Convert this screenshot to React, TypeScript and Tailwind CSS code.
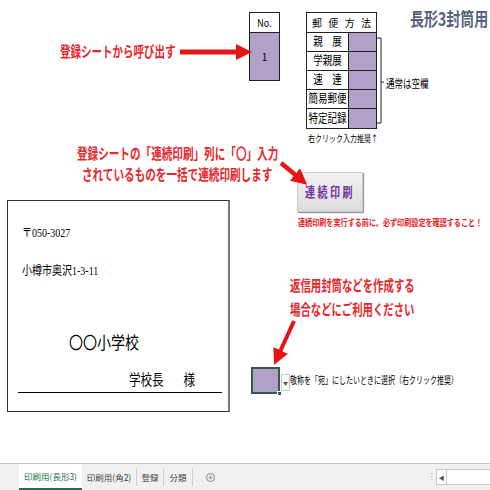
import React from 'react';

const jp = "font-['Noto_Sans_CJK_JP',sans-serif]";
const mincho = "font-['Liberation_Serif','Noto_Sans_CJK_JP',serif]";
const redText = `${jp} absolute whitespace-nowrap leading-none font-bold text-[#e8262b] origin-top scale-y-[1.4]`;

const postalRows = ['親　展', '学親展', '速　達', '簡易郵便', '特定記録'];

const Arrows: React.FC = () => (
  <svg className="absolute inset-0 pointer-events-none" width={490} height={463}>
    <defs>
      <marker id="head" markerUnits="userSpaceOnUse" markerWidth={16} markerHeight={16} refX={4} refY={8} orient="auto">
        <path d="M0,0 L16,8 L0,16 z" fill="#e81414" />
      </marker>
    </defs>
    <line x1={180} y1={52} x2={240} y2={52} stroke="#e81414" strokeWidth={5} markerEnd="url(#head)" />
    <line x1={281} y1={163} x2={298} y2={177} stroke="#e81414" strokeWidth={4.5} markerEnd="url(#head)" />
    <line x1={294} y1={321} x2={279} y2={354} stroke="#e81414" strokeWidth={4} markerEnd="url(#head)" />
    {/* bracket beside postal table */}
    <path d="M377,38 H381 V123 H377 M381,82 H384" fill="none" stroke="#222" strokeWidth={1} />
  </svg>
);

export default function App() {
  return (
    <div className={`w-[490px] h-[490px] bg-white overflow-hidden flex flex-col ${jp}`}>
      <div className="relative h-[463px] shrink-0">
        {/* title */}
        <div className="absolute left-[410px] top-[9px] text-[14px] font-bold leading-none text-[#56647f] origin-top scale-y-[1.3] whitespace-nowrap">
          長形3封筒用
        </div>

        {/* No. box */}
        <div className="absolute left-[249px] top-[12px] w-[31px] border border-[#222] flex flex-col">
          <div className="h-[20px] flex items-center justify-center text-[9px] font-normal text-black border-b border-[#222] bg-white">
            <span className="inline-block scale-y-[1.2]">No.</span>
          </div>
          <div className="h-[47px] flex items-center justify-center text-[10px] text-black bg-[#b1a0c7]">1</div>
        </div>

        {/* postal method table */}
        <div className="absolute left-[306px] top-[12px] w-[71px] border border-[#222] flex flex-col">
          <div className="h-[20px] flex items-center justify-between px-[5px] text-[10px] text-black border-b border-[#222]">
            <span>郵</span><span>便</span><span>方</span><span>法</span>
          </div>
          {postalRows.map((r, i) => (
            <div key={r} className={`h-[19px] flex ${i < postalRows.length - 1 ? 'border-b border-[#222]' : ''}`}>
              <div className="w-[42px] border-r border-[#222] flex items-center justify-center text-[9.5px] text-black leading-none whitespace-nowrap">
                <span className="inline-block scale-y-[1.3]">{r}</span>
              </div>
              <div className="flex-1 bg-[#b1a0c7]" />
            </div>
          ))}
        </div>
        <div className="absolute left-[386px] top-[78px] text-[8.5px] leading-none text-black whitespace-nowrap origin-top scale-y-[1.3]">通常は空欄</div>
        <div className="absolute left-[308px] top-[134px] text-[7px] leading-none text-black whitespace-nowrap origin-top scale-y-[1.3]">右クリック入力推奨↑</div>

        {/* callouts */}
        <div className={`${redText} left-[60px] top-[44px] text-[10.5px]`}>登録シートから呼び出す</div>
        <div className={`${redText} left-[77px] top-[146px] text-[10.6px]`}>登録シートの「連続印刷」列に「〇」入力</div>
        <div className={`${redText} left-[82px] top-[167px] text-[10.6px]`}>されているものを一括で連続印刷します</div>
        <div className={`${redText} left-[290px] top-[278px] text-[10.4px]`}>返信用封筒などを作成する</div>
        <div className={`${redText} left-[290px] top-[302px] text-[10.4px]`}>場合などにご利用ください</div>

        {/* print button */}
        <div className="absolute left-[297px] top-[172px] w-[66px] h-[40px] bg-gradient-to-b from-[#f2f2f2] to-[#dcdcdc] border border-[#c8c8c8] shadow-[1px_1px_1px_#9a9a9a] flex items-center justify-center">
          <span className="text-[10px] font-bold text-[#7030a0] tracking-[2.5px] leading-none scale-y-[1.35] inline-block">連続印刷</span>
        </div>
        <div className={`${redText} left-[298px] top-[218px] text-[7.1px] scale-y-[1.35]`}>連続印刷を実行する前に、必ず印刷設定を確認すること！</div>

        {/* envelope preview */}
        <div className={`absolute left-[7px] top-[200px] w-[223px] h-[212px] border border-[#333] border-r-2 border-r-[#777] flex flex-col pl-[14px] ${mincho} text-black`}>
          <div className="mt-[25px] h-[14px] text-[10px] leading-[14px] whitespace-nowrap">
            <span className="inline-block scale-y-[1.2]">〒050-3027</span>
          </div>
          <div className="mt-[24px] h-[14px] text-[10px] leading-[14px] whitespace-nowrap">
            <span className="inline-block scale-y-[1.2]">小樽市奥沢1-3-11</span>
          </div>
          <div className="mt-[56px] ml-[47px] h-[20px] text-[14px] leading-[20px] whitespace-nowrap">
            <span className="inline-block scale-y-[1.25]">〇〇小学校</span>
          </div>
          <div className="mt-[18px] ml-[107px] h-[16px] flex text-[11.5px] leading-[16px] whitespace-nowrap">
            <span className="inline-block scale-y-[1.25]">学校長</span>
            <span className="inline-block scale-y-[1.25] ml-[20px]">様</span>
          </div>
          <div className="mt-[4px] -ml-[4px] mr-[6px] border-b border-black" />
        </div>

        {/* honorific selector cell */}
        <div className="absolute left-[251px] top-[367px] w-[29px] h-[27px] border-2 border-[#2f5e44] bg-[#b1a0c7]" />
        <div className="absolute left-[277px] top-[391px] w-[5px] h-[5px] bg-[#2f5e44] border border-white" />
        <div className="absolute left-[281px] top-[374px] w-[9px] h-[17px] bg-white border border-[#c8c8c8] flex items-center justify-center text-[5px] text-[#555]">▼</div>
        <div className="absolute left-[290px] top-[376px] text-[7px] leading-none text-black whitespace-nowrap origin-top scale-y-[1.4]">
          敬称を「宛」にしたいときに選択（右クリック推奨）
        </div>

        <Arrows />
      </div>

      {/* sheet tabs */}
      <div className="flex-1 flex items-stretch bg-[#f0f0f0] border-t border-[#c6c6c6] text-[8.5px] text-[#444]">
        <div className="w-[19px]" />
        <div className="w-[63px] bg-white border-b-2 border-[#217346] flex items-center justify-center text-[#217346]">印刷用(長形3)</div>
        <div className="w-[55px] flex items-center justify-center border-r border-[#cfcfcf] my-[4px]">印刷用(角2)</div>
        <div className="w-[27px] flex items-center justify-center border-r border-[#cfcfcf] my-[4px]">登録</div>
        <div className="w-[29px] flex items-center justify-center border-r border-[#cfcfcf] my-[4px]">分類</div>
        <div className="w-[35px] flex items-center justify-center">
          <div className="w-[9px] h-[9px] rounded-full border border-[#888] flex items-center justify-center text-[8px] leading-none text-[#666]">+</div>
        </div>
        <div className="flex-1" />
        <div className="w-[10px] flex items-center justify-center text-[#b0b0b0] text-[9px]">⋮</div>
        <div className="w-[54px] flex items-center py-[5px]">
          <div className="w-[11px] h-full bg-white border border-[#c6c6c6] flex items-center justify-center text-[6px] text-[#555]">◀</div>
          <div className="flex-1 h-full bg-white border-y border-[#c6c6c6]" />
        </div>
      </div>
    </div>
  );
}
